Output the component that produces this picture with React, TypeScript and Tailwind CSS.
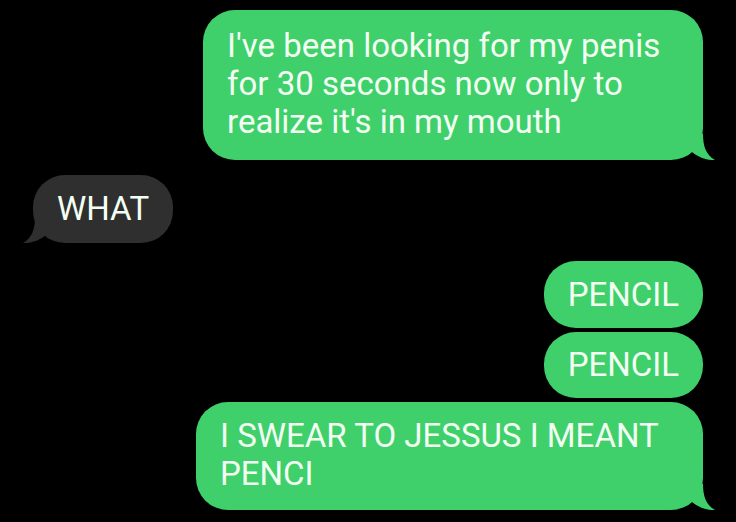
import React from "react";

type Msg = { from: "me" | "them"; lines: string[]; width?: string; pad: string };

const messages: Msg[] = [
  {
    from: "me",
    lines: ["I've been looking for my penis", "for 30 seconds now only to", "realize it's in my mouth"],
    width: "w-[500px]",
    pad: "pt-[17px] pb-[19px]",
  },
  { from: "them", lines: ["WHAT"], pad: "pt-[15px] pb-[15px]" },
  { from: "me", lines: ["PENCIL"], pad: "pt-[15px] pb-[14px]" },
  { from: "me", lines: ["PENCIL"], pad: "pt-[14px] pb-[14px]" },
  {
    from: "me",
    lines: ["I SWEAR TO JESSUS I MEANT", "PENCI"],
    width: "w-[507px]",
    pad: "pt-[15px] pb-[17px]",
  },
];

// little curl at the bottom corner of the last bubble in a run
const Tail = ({ side, color }: { side: "left" | "right"; color: string }) => (
  <svg
    width="24"
    height="26"
    viewBox="0 0 24 26"
    className={`absolute bottom-0 ${side === "right" ? "right-[-12px]" : "left-[-10px] -scale-x-100"}`}
  >
    <path d="M0 0 H12 C12 12 15 21 24 26 C17 26.5 8 24 1 18 Z" fill={color} />
  </svg>
);

const Bubble = ({ msg, tail }: { msg: Msg; tail: boolean }) => {
  const mine = msg.from === "me";
  const color = mine ? "#3fd06b" : "#2f2f2f";
  return (
    <div className={`flex ${mine ? "justify-end" : "justify-start"}`}>
      <div
        className={`relative rounded-[32px] px-6 text-[33px] leading-[38px] whitespace-nowrap text-[#f4fff4] ${msg.pad} ${msg.width ?? ""} ${
          mine ? "bg-[#3fd06b]" : "bg-[#2f2f2f]"
        }`}
      >
        {tail && <Tail side={mine ? "right" : "left"} color={color} />}
        <span className="relative">
          {msg.lines.map((l, i) => (
            <React.Fragment key={i}>
              {i > 0 && <br />}
              {l}
            </React.Fragment>
          ))}
        </span>
      </div>
    </div>
  );
};

export default function App() {
  return (
    <div
      className="w-[736px] h-[522px] overflow-hidden bg-black pl-[33px] pr-[33px] pt-[10px]"
      style={{ fontFamily: "Roboto, 'Liberation Sans', sans-serif" }}
    >
      <Bubble msg={messages[0]} tail />
      <div className="mt-[15px]">
        <Bubble msg={messages[1]} tail />
      </div>
      <div className="mt-[18px] flex flex-col gap-[4px]">
        <Bubble msg={messages[2]} tail={false} />
        <Bubble msg={messages[3]} tail={false} />
        <Bubble msg={messages[4]} tail />
      </div>
    </div>
  );
}
